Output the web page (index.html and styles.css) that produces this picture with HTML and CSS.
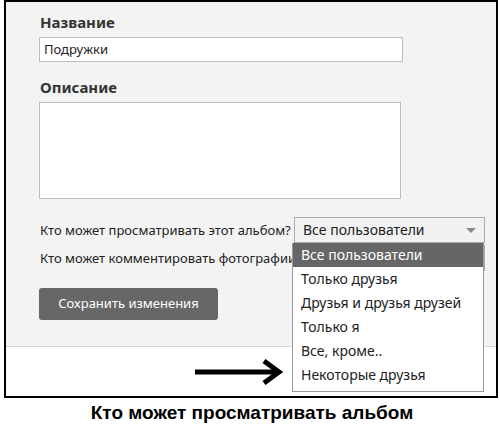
FILE: index.html
```html
<!DOCTYPE html>
<html lang="ru">
<head>
    <meta charset="UTF-8">
    <meta name="viewport" content="width=device-width, initial-scale=1.0">
    <title>Кто может просматривать альбом</title>
    <link rel="stylesheet" href="styles.css">
</head>
<body>

  <div id="frame">
    <div class="panel">
      <div class="field-title">Название</div>
      <div class="text-box">Подружки</div>

      <div class="field-title second">Описание</div>
      <div class="text-area"></div>

      <div class="privacy-row first-row">
        <span class="privacy-label">Кто может просматривать этот альбом?</span>
        <div class="select-box">
          Все пользователи
          <span class="select-arrow"></span>
        </div>

        <ul class="dropdown">
          <li class="selected">Все пользователи</li>
          <li>Только друзья</li>
          <li>Друзья и друзья друзей</li>
          <li>Только я</li>
          <li>Все, кроме..</li>
          <li>Некоторые друзья</li>
        </ul>
      </div>

      <div class="privacy-row">
        <span class="privacy-label">Кто может комментировать фотографии?</span>
        <div class="select-box"></div>
      </div>

      <div class="save-button">Сохранить изменения</div>
    </div>

    <div class="footer">
      <svg class="pointer" width="90" height="26" viewBox="0 0 90 26">
        <path d="M0 13 H84" stroke="#000" stroke-width="5" fill="none"/>
        <path d="M69 2 L84 13 L69 24" stroke="#000" stroke-width="5" fill="none" stroke-linejoin="miter"/>
      </svg>
    </div>
  </div>

  <div class="caption">Кто может просматривать альбом</div>

</body>
</html>
```

FILE: styles.css
```css
body {
  margin: 0;
  font-family: "Noto Sans", "Open Sans", sans-serif;
  color: #222;
  background: #fff;
}

#frame {
  margin-left: 4px;
  width: 490px;
  height: 394px;
  border: 2px solid #000;
  display: flex;
  flex-direction: column;
}

.panel {
  background-color: #f3f3f3;
  border-bottom: 1px solid #d6d6d6;
  padding: 11px 0 0 33px;
  height: 333px;
}

.field-title {
  font-size: 15px;
  font-weight: bold;
  line-height: 18px;
  color: #333;
  padding-left: 1px;
}

.field-title.second {
  margin-top: 16px;
}

.text-box {
  margin-top: 6px;
  width: 358px;
  height: 23px;
  border: 1px solid #bdbdbd;
  background: #fff;
  font-size: 13px;
  line-height: 23px;
  padding-left: 4px;
}

.text-area {
  margin-top: 6px;
  width: 360px;
  height: 95px;
  border: 1px solid #bdbdbd;
  background: #fff;
}

.privacy-row {
  position: relative;
  display: flex;
  align-items: center;
  height: 26px;
  margin-top: 2px;
  font-size: 13px;
}

.privacy-row.first-row {
  margin-top: 18px;
}

.privacy-label {
  width: 254px;
  padding-left: 1px;
  white-space: nowrap;
  overflow: hidden;
}

.select-box {
  position: relative;
  width: 181px;
  height: 24px;
  line-height: 24px;
  border: 1px solid #ababab;
  background: #f1f1f1;
  font-size: 14px;
  padding-left: 8px;
}

.select-arrow {
  position: absolute;
  right: 8px;
  top: 10px;
  border-left: 5px solid transparent;
  border-right: 5px solid transparent;
  border-top: 5px solid #8a8a8a;
}

.dropdown {
  position: absolute;
  z-index: 2;
  left: 253px;
  top: 26px;
  width: 190px;
  margin: 0;
  padding: 0 0 4px 0;
  list-style: none;
  background: #fff;
  border: 1px solid #9a9a9a;
  border-top: none;
  font-size: 14px;
}

.dropdown li {
  height: 24px;
  line-height: 24px;
  padding-left: 8px;
}

.dropdown li.selected {
  background: #666;
  color: #fff;
}

.save-button {
  margin-top: 17px;
  width: 179px;
  height: 32px;
  line-height: 31px;
  text-align: center;
  background: #676767;
  color: #fff;
  border-radius: 3px;
  font-size: 13px;
}

.footer {
  flex: 1;
  padding: 12px 0 0 189px;
}

.pointer {
  display: block;
}

.caption {
  margin-top: 4px;
  text-align: center;
  font-family: "Liberation Sans", Arial, sans-serif;
  font-weight: bold;
  font-size: 19px;
  color: #000;
  padding-left: 4px;
}
```
